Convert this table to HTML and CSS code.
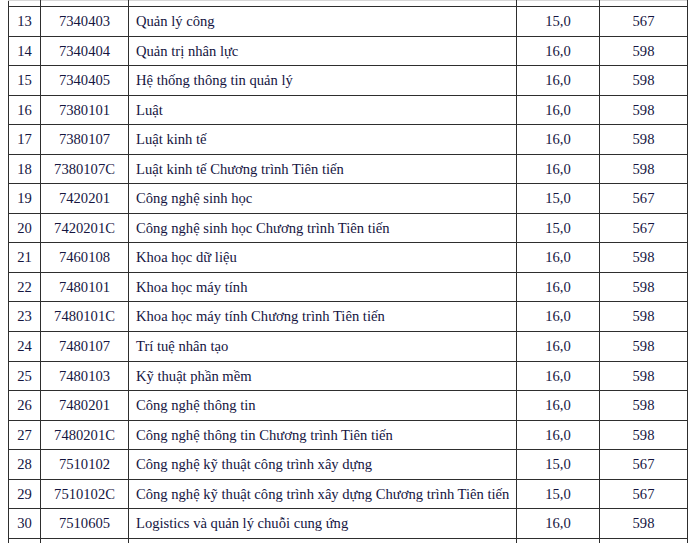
FILE: index.html
```html
<!DOCTYPE html>
<html lang="vi">
<head>
<meta charset="utf-8">
<link rel="stylesheet" href="styles.css">
</head>
<body>
<table class="grid">
  <colgroup>
    <col class="c-stt"><col class="c-code"><col class="c-name"><col class="c-score"><col class="c-pts">
  </colgroup>
  <tbody>
    <tr class="partial top"><td></td><td></td><td></td><td></td><td></td></tr>
    <tr><td>13</td><td>7340403</td><td class="name">Quản lý công</td><td>15,0</td><td>567</td></tr>
    <tr><td>14</td><td>7340404</td><td class="name">Quản trị nhân lực</td><td>16,0</td><td>598</td></tr>
    <tr><td>15</td><td>7340405</td><td class="name">Hệ thống thông tin quản lý</td><td>16,0</td><td>598</td></tr>
    <tr><td>16</td><td>7380101</td><td class="name">Luật</td><td>16,0</td><td>598</td></tr>
    <tr><td>17</td><td>7380107</td><td class="name">Luật kinh tế</td><td>16,0</td><td>598</td></tr>
    <tr><td>18</td><td>7380107C</td><td class="name">Luật kinh tế Chương trình Tiên tiến</td><td>16,0</td><td>598</td></tr>
    <tr><td>19</td><td>7420201</td><td class="name">Công nghệ sinh học</td><td>15,0</td><td>567</td></tr>
    <tr><td>20</td><td>7420201C</td><td class="name">Công nghệ sinh học Chương trình Tiên tiến</td><td>15,0</td><td>567</td></tr>
    <tr><td>21</td><td>7460108</td><td class="name">Khoa học dữ liệu</td><td>16,0</td><td>598</td></tr>
    <tr><td>22</td><td>7480101</td><td class="name">Khoa học máy tính</td><td>16,0</td><td>598</td></tr>
    <tr><td>23</td><td>7480101C</td><td class="name">Khoa học máy tính Chương trình Tiên tiến</td><td>16,0</td><td>598</td></tr>
    <tr><td>24</td><td>7480107</td><td class="name">Trí tuệ nhân tạo</td><td>16,0</td><td>598</td></tr>
    <tr><td>25</td><td>7480103</td><td class="name">Kỹ thuật phần mềm</td><td>16,0</td><td>598</td></tr>
    <tr><td>26</td><td>7480201</td><td class="name">Công nghệ thông tin</td><td>16,0</td><td>598</td></tr>
    <tr><td>27</td><td>7480201C</td><td class="name">Công nghệ thông tin Chương trình Tiên tiến</td><td>16,0</td><td>598</td></tr>
    <tr><td>28</td><td>7510102</td><td class="name">Công nghệ kỹ thuật công trình xây dựng</td><td>15,0</td><td>567</td></tr>
    <tr><td>29</td><td>7510102C</td><td class="name">Công nghệ kỹ thuật công trình xây dựng Chương trình Tiên tiến</td><td>15,0</td><td>567</td></tr>
    <tr><td>30</td><td>7510605</td><td class="name">Logistics và quản lý chuỗi cung ứng</td><td>16,0</td><td>598</td></tr>
    <tr class="partial bottom"><td></td><td></td><td></td><td></td><td></td></tr>
  </tbody>
</table>
</body>
</html>
```

FILE: styles.css
```css
html, body {
  margin: 0;
  padding: 0;
  background: #ffffff;
  overflow: hidden;
}

body {
  padding-left: 8px;
  height: 543px;
  font-family: "Liberation Serif", "Times New Roman", serif;
  color: #15153f;
}

.grid {
  border-collapse: collapse;
  table-layout: fixed;
  width: 679px;
  font-size: 14.6px;
}

.c-stt { width: 32px; }
.c-code { width: 88px; }
.c-name { width: 388px; }
.c-score { width: 83px; }
.c-pts { width: 88px; }

.grid td {
  border: 1.5px solid #2e2e2e;
  height: 29.56px;
  padding: 0;
  text-align: center;
  vertical-align: middle;
  white-space: nowrap;
  box-sizing: border-box;
  line-height: 1;
}

.grid td.name {
  text-align: left;
  padding-left: 7px;
}

.grid tr.partial td {
  height: 6px;
}

.grid tr.partial.top td {
  border-top: 1px solid #d8d8d8;
}
```
